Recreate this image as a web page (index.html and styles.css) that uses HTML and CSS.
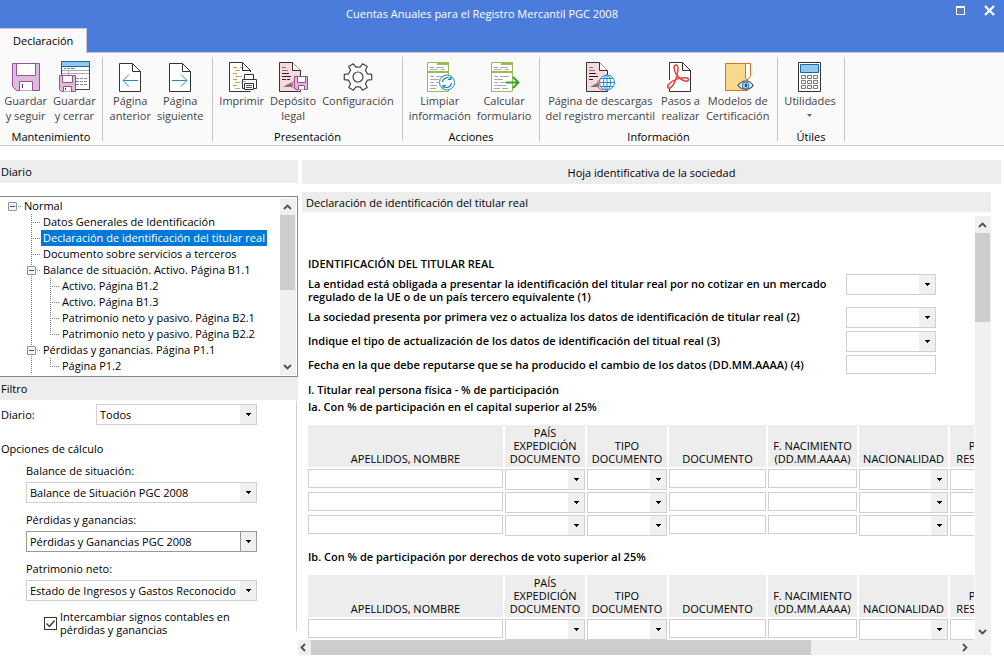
FILE: index.html
```html
<!DOCTYPE html>
<html lang="es">
<head>
<meta charset="utf-8">
<title>Cuentas Anuales para el Registro Mercantil PGC 2008</title>
<link rel="stylesheet" href="styles.css">
</head>
<body>
<header class="titlebar">
  <h1 class="window-title">Cuentas Anuales para el Registro Mercantil PGC 2008</h1>
  <div class="window-buttons">
    <button class="window-button" type="button" aria-label="Maximizar"><svg width="11" height="11" viewBox="0 0 11 11"><path d="M1 2.500H10M1.500 2V9.500H9.500V2" fill="none" stroke="#fff"/><path d="M1 1h9v2H1z" fill="#fff"/></svg></button>
    <button class="window-button" type="button" aria-label="Cerrar"><svg width="11" height="11" viewBox="0 0 11 11"><path d="M1 1l9 9M10 1L1 10" stroke="#fff" stroke-width="2.200"/></svg></button>
  </div>
</header>
<nav class="tabs"><a class="tab" href="#ribbon">Declaración</a></nav>

<section class="ribbon" id="ribbon">
  <div class="group group-save">
    <div class="tools">
      <button class="tool" type="button">
        <svg class="icon" viewBox="0 0 32 32"><path d="M2.500 2.500h27v27h-23l-4-4z" fill="#dcbbdc" stroke="#9b4f9b"/><path d="M6.500 2.500h19v12h-19zM9.500 29.500v-9h13v9" fill="#fff" stroke="#9b4f9b"/><path d="M12.500 23v4" stroke="#444"/></svg>
        <span>Guardar<br>y seguir</span></button>
      <button class="tool" type="button">
        <svg class="icon" viewBox="0 0 32 32"><path d="M3.500 0.500h28v28h-28z" fill="#fff" stroke="#444"/><path d="M3.500 0.500h28v5h-28z" fill="#92c8ee" stroke="#1767ab"/><path d="M6 7.500h2m1 0h3m1 0h4M18 17.500h3m1 0h3m1 0h3M18 20.500h3m1 0h3m1 0h3M18 23.500h3m1 0h3m1 0h3" stroke="#888"/><path d="M4 9.500h27M4 12.500h27M10.500 10v5" stroke="#aaa"/><path d="M1.500 14.500h16v16h-14l-2-2z" fill="#dcbbdc" stroke="#9b4f9b"/><path d="M4.500 14.500h10v7h-10zM5.500 30.500v-5h8v5" fill="#fff" stroke="#9b4f9b"/><path d="M7.500 27v2" stroke="#444"/></svg>
        <span>Guardar<br>y cerrar</span></button>
    </div>
    <h2 class="group-name">Mantenimiento</h2>
  </div>
  <div class="group group-pages">
    <div class="tools">
      <button class="tool" type="button">
        <svg class="icon" viewBox="0 0 32 32"><path d="M5.500 2.500h13l8 8v20h-21z" fill="#fff" stroke="#333"/><path d="M18.500 2.500v8h8" fill="none" stroke="#333"/><path d="M24 19.500H9.500M15 13.500l-6 6 6 6" fill="none" stroke="#1e88cb"/></svg>
        <span>Página<br>anterior</span></button>
      <button class="tool" type="button">
        <svg class="icon" viewBox="0 0 32 32"><path d="M5.500 2.500h13l8 8v20h-21z" fill="#fff" stroke="#333"/><path d="M18.500 2.500v8h8" fill="none" stroke="#333"/><path d="M8 19.500h14.500M17 13.500l6 6-6 6" fill="none" stroke="#1e88cb"/></svg>
        <span>Página<br>siguiente</span></button>
    </div>
    <h2 class="group-name"></h2>
  </div>
  <div class="group group-output">
    <div class="tools">
      <button class="tool" type="button">
        <svg class="icon" viewBox="0 0 32 32"><path d="M24.500 11V9.500l-8-8h-13v29h21" fill="#fff" stroke="#333"/><path d="M16.500 1.500v8h8" fill="none" stroke="#333"/><path d="M7 6.500h4M7 12.500h4M7 18.500h4M7 24.500h4" stroke="#e8930c"/><path d="M9 9.500h5M9 15.500h7M9 21.500h5M9 27.500h5M14 6.500h2" stroke="#aaa"/><path d="M18.500 18.500v-5h9v5M16.500 18.500h14v9h-14z" fill="#fff" stroke="#333"/><path d="M18.500 22.500h9v6h-9z" fill="#fff" stroke="#333"/><path d="M20 24.500h6M20 26.500h6" stroke="#555"/><path d="M17.500 20.500h2" stroke="#1e88cb"/></svg>
        <span>Imprimir</span></button>
      <button class="tool" type="button">
        <svg class="icon" viewBox="0 0 32 32"><path d="M2.500 1.500h13l8 8v21h-21z" fill="#f8d9de" stroke="#333"/><path d="M15.500 1.500v8h8" fill="#fff" stroke="#333"/><path d="M5 6.500h4M5 9.500h6" stroke="#777"/><path d="M5 12.500h7M5 15.500h9M5 18.500h4M10 18.500h3" stroke="#222"/><path d="M6 26l9-5-2 5zM10 23h5v4" fill="#777"/><path d="M20 18c-6 2-7 9 1 11" fill="none" stroke="#e05060"/><path d="M17.500 15.500h13v13h-11l-2-2z" fill="#dcbbdc" stroke="#9b4f9b"/><path d="M20.500 15.500h8v6h-8zM21.500 28.500v-4h6v4" fill="#fff" stroke="#9b4f9b"/></svg>
        <span>Depósito<br>legal</span></button>
      <button class="tool" type="button">
        <svg class="icon" viewBox="0 0 32 32" fill="#fff" stroke="#444" stroke-width="1.200" stroke-linejoin="round"><path d="M25.500 12.900L29.700 13.300V18.700L25.500 19.100 23.400 22.700 25.200 26.600 20.600 29.200 18.100 25.800H13.900L11.400 29.200 6.800 26.600 8.600 22.700 6.500 19.100 2.300 18.700V13.300L6.500 12.900 8.600 9.300 6.800 5.400 11.400 2.800 13.900 6.200H18.100L20.600 2.800 25.200 5.400 23.400 9.300z"/><circle cx="16" cy="16" r="5"/></svg>
        <span>Configuración</span></button>
    </div>
    <h2 class="group-name">Presentación</h2>
  </div>
  <div class="group group-actions">
    <div class="tools">
      <button class="tool" type="button">
        <svg class="icon" viewBox="0 0 32 32"><path d="M3.500 1.500h21v29h-21zM3.500 11.500h21" fill="#fff" stroke="#9cba57"/><path d="M13 1h12v3H13zM3 10h22v2H3z" fill="#9cba57"/><path d="M6 6.500h4m2 0h8M6 8.500h7m4 0h4M6 15.500h4m2 0h6M6 18.500h9M6 21.500h4m2 0h3M6 24.500h7M6 27.500h6" stroke="#aaa"/><circle cx="23" cy="21.500" r="7.500" fill="#fff" stroke="#1e88cb"/><path d="M18.500 21a5 5 0 0 1 8.500-3M27 15.500V18.500h-3M27.500 22a5 5 0 0 1-8.500 3M19 27.500V24.500h3" fill="none" stroke="#1e88cb" stroke-width="1.200"/></svg>
        <span>Limpiar<br>información</span></button>
      <button class="tool" type="button">
        <svg class="icon" viewBox="0 0 32 32"><path d="M3.500 1.500h21v29h-21z" fill="#fff" stroke="#9cba57"/><path d="M13 1h12v3H13zM3 10h22v2H3z" fill="#9cba57"/><path d="M6 6.500h4m2 0h8M6 8.500h7m4 0h4M6 15.500h4m2 0h9M6 18.500h9M6 21.500h4m2 0h6M6 24.500h12M6 27.500h6m2 0h6" stroke="#aaa"/><path d="M18 21.500h12.500M25 16l5.500 5.500L25 27" fill="none" stroke="#35a12a" stroke-width="1.800"/></svg>
        <span>Calcular<br>formulario</span></button>
    </div>
    <h2 class="group-name">Acciones</h2>
  </div>
  <div class="group group-info">
    <div class="tools">
      <button class="tool" type="button">
        <svg class="icon" viewBox="0 0 32 32"><path d="M2.500 1.500h13l8 8v21h-21z" fill="#f8d9de" stroke="#333"/><path d="M15.500 1.500v8h8" fill="#fff" stroke="#333"/><path d="M5 6.500h4M5 9.500h6" stroke="#777"/><path d="M5 12.500h7M5 15.500h9M5 18.500h4" stroke="#222"/><path d="M6 26l9-5-2 5zM10 23h5v4" fill="#777"/><path d="M17 18c-5 2-6 9 2 11" fill="none" stroke="#e05060"/><g fill="#fff" stroke="#1e88cb"><circle cx="23" cy="21.500" r="7.500"/><ellipse cx="23" cy="21.500" rx="3.500" ry="7.500"/><path d="M23 14v15M15.500 21.500h15M17 17.500h12M17 25.500h12"/></g></svg>
        <span>Página de descargas<br>del registro mercantil</span></button>
      <button class="tool" type="button">
        <svg class="icon" viewBox="0 0 32 32"><path d="M5.500 1.500h13l8 8v21h-21z" fill="#fff" stroke="#333"/><path d="M18.500 1.500v8h8" fill="none" stroke="#333"/><path d="M4 19h3v9H4z" fill="#fafafa"/><path d="M12 4c-3 0-2 5 0 9 2 3 5 6 9 7 3 1 5-2 2-3-5-1-13 1-17 5-4 3-2 6 0 5 4-2 7-11 8-18 0-3 0-5-2-5z" fill="none" stroke="#e6413f" stroke-width="1.500"/></svg>
        <span>Pasos a<br>realizar</span></button>
      <button class="tool" type="button">
        <svg class="icon" viewBox="0 0 32 32"><path d="M3.500 2.500h25v13l-4 4v10h-21z" fill="#fff" stroke="#e0701e"/><path d="M3.500 2.500h20v15l2 2v10h-22z" fill="#f8d88c" stroke="#e0701e"/><path d="M16 24.500c4-6 12-6 15 0-3 5-11 5-15 0z" fill="#fff" stroke="#444" stroke-width="1.200"/><circle cx="23.500" cy="24.500" r="3.500" fill="#92c8ee" stroke="#1e78bb"/><path d="M23 23h2v3h-2z" fill="#205080"/></svg>
        <span>Modelos de<br>Certificación</span></button>
    </div>
    <h2 class="group-name">Información</h2>
  </div>
  <div class="group group-utils">
    <div class="tools">
      <button class="tool" type="button">
        <svg class="icon" viewBox="0 0 32 32"><path d="M4.500 1.500h22v29h-22z" fill="#fff" stroke="#333"/><path d="M6.500 3.500h18v8h-18z" fill="#92c8ee" stroke="#1767ab"/><path d="M7.500 14.500h4v3h-4zM13.500 14.500h4v3h-4zM19.500 14.500h4v3h-4zM7.500 19.500h4v3h-4zM13.500 19.500h4v3h-4zM19.500 19.500h4v3h-4zM7.500 24.500h4v3h-4zM13.500 24.500h4v3h-4zM19.500 24.500h4v3h-4z" fill="#fff" stroke="#777"/></svg>
        <span>Utilidades</span>
        <svg class="caret" viewBox="0 0 5 3"><path d="M0 0h5L2.500 3z" fill="#666"/></svg></button>
    </div>
    <h2 class="group-name">Útiles</h2>
  </div>
</section>

<main class="workspace">
  <aside class="sidebar">
    <h2 class="bar bar-side">Diario</h2>
    <div class="tree-box">
      <ul class="tree">
        <li class="node last"><div class="row"><button class="toggle" type="button" aria-label="Contraer Normal"></button><a class="label" href="#n">Normal</a></div>
          <ul class="branch">
            <li class="node"><div class="row leaf"><a class="label" href="#n">Datos Generales de Identificación</a></div></li>
            <li class="node"><div class="row leaf"><a class="label selected" href="#n">Declaración de identificación del titular real</a></div></li>
            <li class="node"><div class="row leaf"><a class="label" href="#n">Documento sobre servicios a terceros</a></div></li>
            <li class="node"><div class="row"><button class="toggle" type="button" aria-label="Contraer Balance de situación"></button><a class="label" href="#n">Balance de situación. Activo. Página B1.1</a></div>
              <ul class="branch">
                <li class="node"><div class="row leaf"><a class="label" href="#n">Activo. Página B1.2</a></div></li>
                <li class="node"><div class="row leaf"><a class="label" href="#n">Activo. Página B1.3</a></div></li>
                <li class="node"><div class="row leaf"><a class="label" href="#n">Patrimonio neto y pasivo. Página B2.1</a></div></li>
                <li class="node last"><div class="row leaf"><a class="label" href="#n">Patrimonio neto y pasivo. Página B2.2</a></div></li>
              </ul></li>
            <li class="node"><div class="row"><button class="toggle" type="button" aria-label="Contraer Pérdidas y ganancias"></button><a class="label" href="#n">Pérdidas y ganancias. Página P1.1</a></div>
              <ul class="branch">
                <li class="node last"><div class="row leaf"><a class="label" href="#n">Página P1.2</a></div></li>
              </ul></li>
          </ul></li>
      </ul>
      <div class="vscroll">
        <button class="scroll-button" type="button" aria-label="Subir"><svg width="9" height="6" viewBox="0 0 9 6"><path d="M1 5l3.500-3.500L8 5" fill="none" stroke="#505050" stroke-width="1.800"/></svg></button>
        <div class="thumb thumb-tree"></div>
        <button class="scroll-button push" type="button" aria-label="Bajar"><svg width="9" height="6" viewBox="0 0 9 6"><path d="M1 1l3.500 3.500L8 1" fill="none" stroke="#505050" stroke-width="1.800"/></svg></button>
      </div>
    </div>
    <h2 class="bar bar-side">Filtro</h2>
    <form class="filter">
      <div class="filter-line"><label for="diario">Diario:</label><select class="field combo combo-diario" id="diario"><option>Todos</option></select></div>
      <h3 class="filter-heading">Opciones de cálculo</h3>
      <div class="options">
        <label for="balance">Balance de situación:</label>
        <select class="field combo" id="balance"><option>Balance de Situación PGC 2008</option></select>
        <label for="perdidas">Pérdidas y ganancias:</label>
        <select class="field combo active" id="perdidas"><option>Pérdidas y Ganancias PGC 2008</option></select>
        <label for="patrimonio">Patrimonio neto:</label>
        <select class="field combo" id="patrimonio"><option>Estado de Ingresos y Gastos Reconocido</option></select>
        <div class="check"><input class="checkbox" type="checkbox" id="signos" checked><label for="signos">Intercambiar signos contables en pérdidas y ganancias</label></div>
      </div>
    </form>
  </aside>

  <section class="document">
    <h2 class="bar bar-sheet">Hoja identificativa de la sociedad</h2>
    <h3 class="bar bar-section">Declaración de identificación del titular real</h3>
    <div class="viewport">
      <div class="page">
        <h4 class="page-title">IDENTIFICACIÓN DEL TITULAR REAL</h4>
        <div class="questions">
          <div class="question"><label for="q1">La entidad está obligada a presentar la identificación del titular real por no cotizar en un mercado<br>regulado de la UE o de un país tercero equivalente (1)</label><select class="field combo" id="q1"></select></div>
          <div class="question"><label for="q2">La sociedad presenta por primera vez o actualiza los datos de identificación de titular real (2)</label><select class="field combo" id="q2"></select></div>
          <div class="question"><label for="q3">Indique el tipo de actualización de los datos de identificación del titual real (3)</label><select class="field combo" id="q3"></select></div>
          <div class="question"><label for="q4">Fecha en la que debe reputarse que se ha producido el cambio de los datos (DD.MM.AAAA) (4)</label><input class="field" type="text" id="q4"></div>
        </div>
        <h4 class="subtitle">I. Titular real persona física - % de participación</h4>
        <h5 class="subtitle" id="ta">Ia. Con % de participación en el capital superior al 25%</h5>
        <table class="holders" aria-labelledby="ta">
          <colgroup><col class="c-name"><col class="c-code"><col class="c-code"><col class="c-doc"><col class="c-date"><col class="c-date"><col class="c-home"></colgroup>
          <thead><tr><th>APELLIDOS, NOMBRE</th><th>PAÍS EXPEDICIÓN DOCUMENTO</th><th>TIPO DOCUMENTO</th><th>DOCUMENTO</th><th>F. NACIMIENTO (DD.MM.AAAA)</th><th>NACIONALIDAD</th><th>PAÍS<br>RESIDEN.</th></tr></thead>
          <tbody>
            <tr><td><input class="field" type="text" aria-label="Apellidos, nombre"></td><td><select class="field combo" aria-label="País expedición"></select></td><td><select class="field combo" aria-label="Tipo documento"></select></td><td><input class="field" type="text" aria-label="Documento"></td><td><input class="field" type="text" aria-label="F. nacimiento"></td><td><select class="field combo" aria-label="Nacionalidad"></select></td><td><select class="field combo" aria-label="País residencia"></select></td></tr>
            <tr><td><input class="field" type="text" aria-label="Apellidos, nombre"></td><td><select class="field combo" aria-label="País expedición"></select></td><td><select class="field combo" aria-label="Tipo documento"></select></td><td><input class="field" type="text" aria-label="Documento"></td><td><input class="field" type="text" aria-label="F. nacimiento"></td><td><select class="field combo" aria-label="Nacionalidad"></select></td><td><select class="field combo" aria-label="País residencia"></select></td></tr>
            <tr><td><input class="field" type="text" aria-label="Apellidos, nombre"></td><td><select class="field combo" aria-label="País expedición"></select></td><td><select class="field combo" aria-label="Tipo documento"></select></td><td><input class="field" type="text" aria-label="Documento"></td><td><input class="field" type="text" aria-label="F. nacimiento"></td><td><select class="field combo" aria-label="Nacionalidad"></select></td><td><select class="field combo" aria-label="País residencia"></select></td></tr>
          </tbody>
        </table>
        <h5 class="subtitle" id="tb">Ib. Con % de participación por derechos de voto superior al 25%</h5>
        <table class="holders" aria-labelledby="tb">
          <colgroup><col class="c-name"><col class="c-code"><col class="c-code"><col class="c-doc"><col class="c-date"><col class="c-date"><col class="c-home"></colgroup>
          <thead><tr><th>APELLIDOS, NOMBRE</th><th>PAÍS EXPEDICIÓN DOCUMENTO</th><th>TIPO DOCUMENTO</th><th>DOCUMENTO</th><th>F. NACIMIENTO (DD.MM.AAAA)</th><th>NACIONALIDAD</th><th>PAÍS<br>RESIDEN.</th></tr></thead>
          <tbody>
            <tr><td><input class="field" type="text" aria-label="Apellidos, nombre"></td><td><select class="field combo" aria-label="País expedición"></select></td><td><select class="field combo" aria-label="Tipo documento"></select></td><td><input class="field" type="text" aria-label="Documento"></td><td><input class="field" type="text" aria-label="F. nacimiento"></td><td><select class="field combo" aria-label="Nacionalidad"></select></td><td><select class="field combo" aria-label="País residencia"></select></td></tr>
          </tbody>
        </table>
      </div>
      <div class="vscroll">
        <button class="scroll-button" type="button" aria-label="Subir"><svg width="9" height="6" viewBox="0 0 9 6"><path d="M1 5l3.500-3.500L8 5" fill="none" stroke="#505050" stroke-width="1.800"/></svg></button>
        <div class="thumb thumb-page"></div>
        <button class="scroll-button push" type="button" aria-label="Bajar"><svg width="9" height="6" viewBox="0 0 9 6"><path d="M1 1l3.500 3.500L8 1" fill="none" stroke="#505050" stroke-width="1.800"/></svg></button>
      </div>
    </div>
    <div class="hscroll">
      <button class="scroll-button side" type="button" aria-label="Izquierda"><svg width="6" height="9" viewBox="0 0 6 9"><path d="M5 1L1.500 4.500 5 8" fill="none" stroke="#505050" stroke-width="1.800"/></svg></button>
      <div class="thumb-wide"></div>
      <button class="scroll-button side push" type="button" aria-label="Derecha"><svg width="6" height="9" viewBox="0 0 6 9"><path d="M1 1l3.500 3.500L1 8" fill="none" stroke="#505050" stroke-width="1.800"/></svg></button>
    </div>
  </section>
</main>
</body>
</html>
```

FILE: styles.css
```css
* { box-sizing: border-box; }

body {
  margin: 0;
  height: 100vh;
  display: flex;
  flex-direction: column;
  overflow: hidden;
  background: #fff;
  color: #000;
  font: 11px/16px "Open Sans", "Noto Sans", sans-serif;
}

h1, h2, h3, h4, h5, ul { margin: 0; padding: 0; font-size: inherit; font-weight: inherit; }
ul { list-style: none; }
a { color: inherit; text-decoration: none; }
button { border: 0; padding: 0; margin: 0; background: none; font: inherit; color: inherit; }
svg { display: block; }

/* Title bar and tabs */
.titlebar { display: grid; grid-template-columns: 1fr auto 1fr; height: 28px; background: #4c7cdb; color: #fff; }
.window-title { grid-column: 2; padding-top: 6px; margin-right: 40px; }
.window-buttons { display: flex; justify-content: flex-end; align-items: flex-start; gap: 18px; padding: 5px 9px; }
.tabs { display: flex; height: 24px; background: #4c7cdb; }
.tab { padding: 4px 13px 0; background: #fafafa; border: 1px solid #c8c8c8; border-width: 1px 1px 0 0; height: 25px; z-index: 1; }

/* Ribbon */
.ribbon { display: flex; height: 94px; padding: 4px 0; background: #fafafa; border: 1px solid #c8c8c8; border-width: 1px 0; flex: none; }
.group { display: flex; flex-direction: column; border-right: 1px solid #c4c4c4; }
.tools { display: flex; justify-content: center; flex: 1; padding-right: 2px; }
.tool { display: flex; flex-direction: column; align-items: center; padding: 4px 3px 0; line-height: 15px; color: #444; white-space: nowrap; }
.icon { width: 32px; height: 32px; }
.caret { width: 5px; height: 3px; margin-top: 6px; }
.group-name { text-align: center; height: 13px; line-height: 13px; margin-bottom: -2px; }
.group-save { width: 103px; }
.group-pages { width: 110px; }
.group-output { width: 190px; }
.group-actions { width: 137px; }
.group-info { width: 238px; }
.group-utils { width: 67px; }

/* Work area */
.workspace { display: flex; flex: 1; min-height: 0; padding: 14px 3px 2px 0; }
.sidebar { width: 298px; flex: none; display: flex; flex-direction: column; }
.bar { background: #ededed; flex: none; }
.bar-side { height: 23px; padding: 4px 1px 0; }
.bar-sheet { height: 24px; padding-top: 5px; text-align: center; margin-left: 4px; }
.bar-section { height: 20px; padding: 3px 4px 0; margin: 8px 10px 0 4px; }

/* Tree */
.tree-box { display: flex; height: 181px; margin-top: 13px; border: 1px solid #828790; border-left: 0; padding: 1px 1px 1px 0; }
.tree { flex: 1; padding-left: 8px; overflow: hidden; white-space: nowrap; }
.branch { padding-left: 19px; }
.branch > .node { background: repeating-linear-gradient(#808080 0 1px, transparent 1px 2px) 4px 0 / 1px 100% no-repeat; }
.branch > .node.last { background-size: 1px 8px; }
.row { display: flex; align-items: center; height: 16px; background: repeating-linear-gradient(90deg, #808080 0 1px, transparent 1px 2px) 4px 8px / 9px 1px no-repeat; }
.leaf { padding-left: 14px; }
.toggle { width: 9px; height: 9px; margin-right: 5px; border: 1px solid #919191; border-radius: 1px; background: linear-gradient(#3c50a0, #3c50a0) center / 5px 1px no-repeat, #f4f4f4; }
.label { padding: 0 2px; }
.selected { background: #0078d7; color: #fff; }

/* Scroll bars */
.vscroll { display: flex; flex-direction: column; width: 16px; flex: none; background: #f0f0f0; }
.scroll-button { display: grid; place-items: center; height: 17px; padding-right: 2px; flex: none; }
.push { margin-top: auto; }
.thumb { background: #cdcdcd; margin-right: 1px; }
.thumb-tree { height: 75px; }
.thumb-page { height: 21%; }

/* Fields */
.field { display: block; width: 100%; height: 19px; margin: 0; padding: 0 3px; border: 1px solid #d0d0d0; border-radius: 0; background: #fff; font: inherit; color: #000; }
.combo {
  height: 21px;
  appearance: none;
  background:
    url("data:image/svg+xml,%3Csvg xmlns='http://www.w3.org/2000/svg' width='5' height='3'%3E%3Cpath d='M0 0h5v1H0zM1 1h3v1H1zM2 2h1v1H2z'/%3E%3C/svg%3E") right 5px center / 5px 3px no-repeat,
    linear-gradient(#f0f0f0, #f0f0f0) right / 16px 100% no-repeat,
    #fff;
}
.combo.active {
  border-color: #999;
  background:
    url("data:image/svg+xml,%3Csvg xmlns='http://www.w3.org/2000/svg' width='5' height='3'%3E%3Cpath d='M0 0h5v1H0zM1 1h3v1H1zM2 2h1v1H2z'/%3E%3C/svg%3E") right 5px center / 5px 3px no-repeat,
    linear-gradient(#f0f0f0, #f0f0f0) right / 15px 100% no-repeat,
    linear-gradient(#999, #999) right / 16px 100% no-repeat,
    #fff;
}

/* Filter */
.filter { border-right: 1px solid #d0d0d0; margin: 1px 1px 0 0; padding: 3px 39px 0 1px; height: 230px; }
.filter-line { display: flex; justify-content: space-between; align-items: center; }
.combo-diario { width: 161px; }
.filter-heading { margin: 16px 0 6px; }
.options { display: grid; gap: 3px; padding-left: 25px; }
.options .combo { margin-bottom: 6px; }
.check { display: flex; align-items: center; gap: 3px; padding-left: 18px; line-height: 13px; }
.checkbox { appearance: none; width: 13px; height: 13px; margin: 0; flex: none; border: 1px solid #333; background: url("data:image/svg+xml,%3Csvg xmlns='http://www.w3.org/2000/svg' width='11' height='11'%3E%3Cpath d='M1.500 5.500l3 3 5-6' fill='none' stroke='%23333' stroke-width='1.300'/%3E%3C/svg%3E") center no-repeat; }

/* Document */
.document { flex: 1; min-width: 0; display: flex; flex-direction: column; }
.viewport { display: flex; flex: 1; min-height: 0; margin: 4px 10px 0 0; }
.page { flex: 1; min-width: 0; overflow: hidden; padding: 40px 0 0 10px; border-right: 1px solid #fff; }
.page-title, .subtitle, .question { font-weight: 600; }
.questions { display: grid; gap: 3px; margin-top: 2px; }
.question { display: grid; grid-template-columns: 538px 90px; line-height: 13px; }
.question label { padding: 3px 0 1px; white-space: nowrap; }
.subtitle { line-height: 17px; }
.questions + .subtitle { margin-top: 7px; }
.holders { table-layout: fixed; width: 706px; margin: 8px 0 10px -2px; border-spacing: 2px; line-height: 13px; }
.holders th { height: 42px; padding: 0 0 2px; background: #ededed; font-weight: 400; vertical-align: bottom; }
.holders td { height: 21px; padding: 0; vertical-align: top; }
.c-name { width: 195px; }
.c-code { width: 80px; }
.c-doc { width: 97px; }
.c-date { width: 89px; }
.c-home { width: 60px; }

.hscroll { display: flex; height: 15px; margin-right: 10px; padding-right: 18px; background: #f0f0f0; flex: none; }
.side { width: 13px; height: 15px; padding-right: 4px; }
.hscroll .push { margin: 0 0 0 auto; }
.thumb-wide { width: 74%; background: #cdcdcd; }
```
